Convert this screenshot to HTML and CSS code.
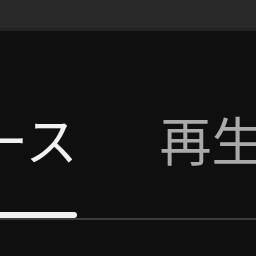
FILE: index.html
```html
<!DOCTYPE html>
<html lang="ja">
<head>
  <meta charset="UTF-8">
  <meta name="viewport" content="width=device-width, initial-scale=1.0">
  <title>タブ</title>
  <link rel="stylesheet" href="styles.css">
</head>
<body>
  <div class="top-bar"></div>
  <div class="tabs">
    <div class="tab active">
      <span class="tab-label">ニュース</span>
      <div class="indicator"></div>
    </div>
    <div class="tab">
      <span class="tab-label">再生リスト</span>
      <div class="indicator"></div>
    </div>
  </div>
</body>
</html>
```

FILE: styles.css
```css
body {
  margin: 0;
  background-color: #0f0f0f;
  font-family: "Noto Sans CJK JP", "Noto Sans", sans-serif;
  overflow: hidden;
}
.top-bar {
  height: 28px;
  background-color: #292929;
  border-bottom: 3px solid #222;
}
.tabs {
  display: flex;
  gap: 82px;
  height: 187px;
  margin-left: -128px;
  border-bottom: 2px solid #3d3d3d;
  width: 600px;
}
.tab {
  display: flex;
  flex-direction: column;
  justify-content: flex-end;
  flex-shrink: 0;
}
.tab-label {
  font-size: 52px;
  line-height: 52px;
  color: #aaa;
  margin-bottom: 47px;
  white-space: nowrap;
}
.indicator {
  height: 6px;
  border-radius: 0 3px 3px 0;
}
.tab.active .tab-label {
  color: #f1f1f1;
}
.tab.active .indicator {
  background-color: #f1f1f1;
}
```
